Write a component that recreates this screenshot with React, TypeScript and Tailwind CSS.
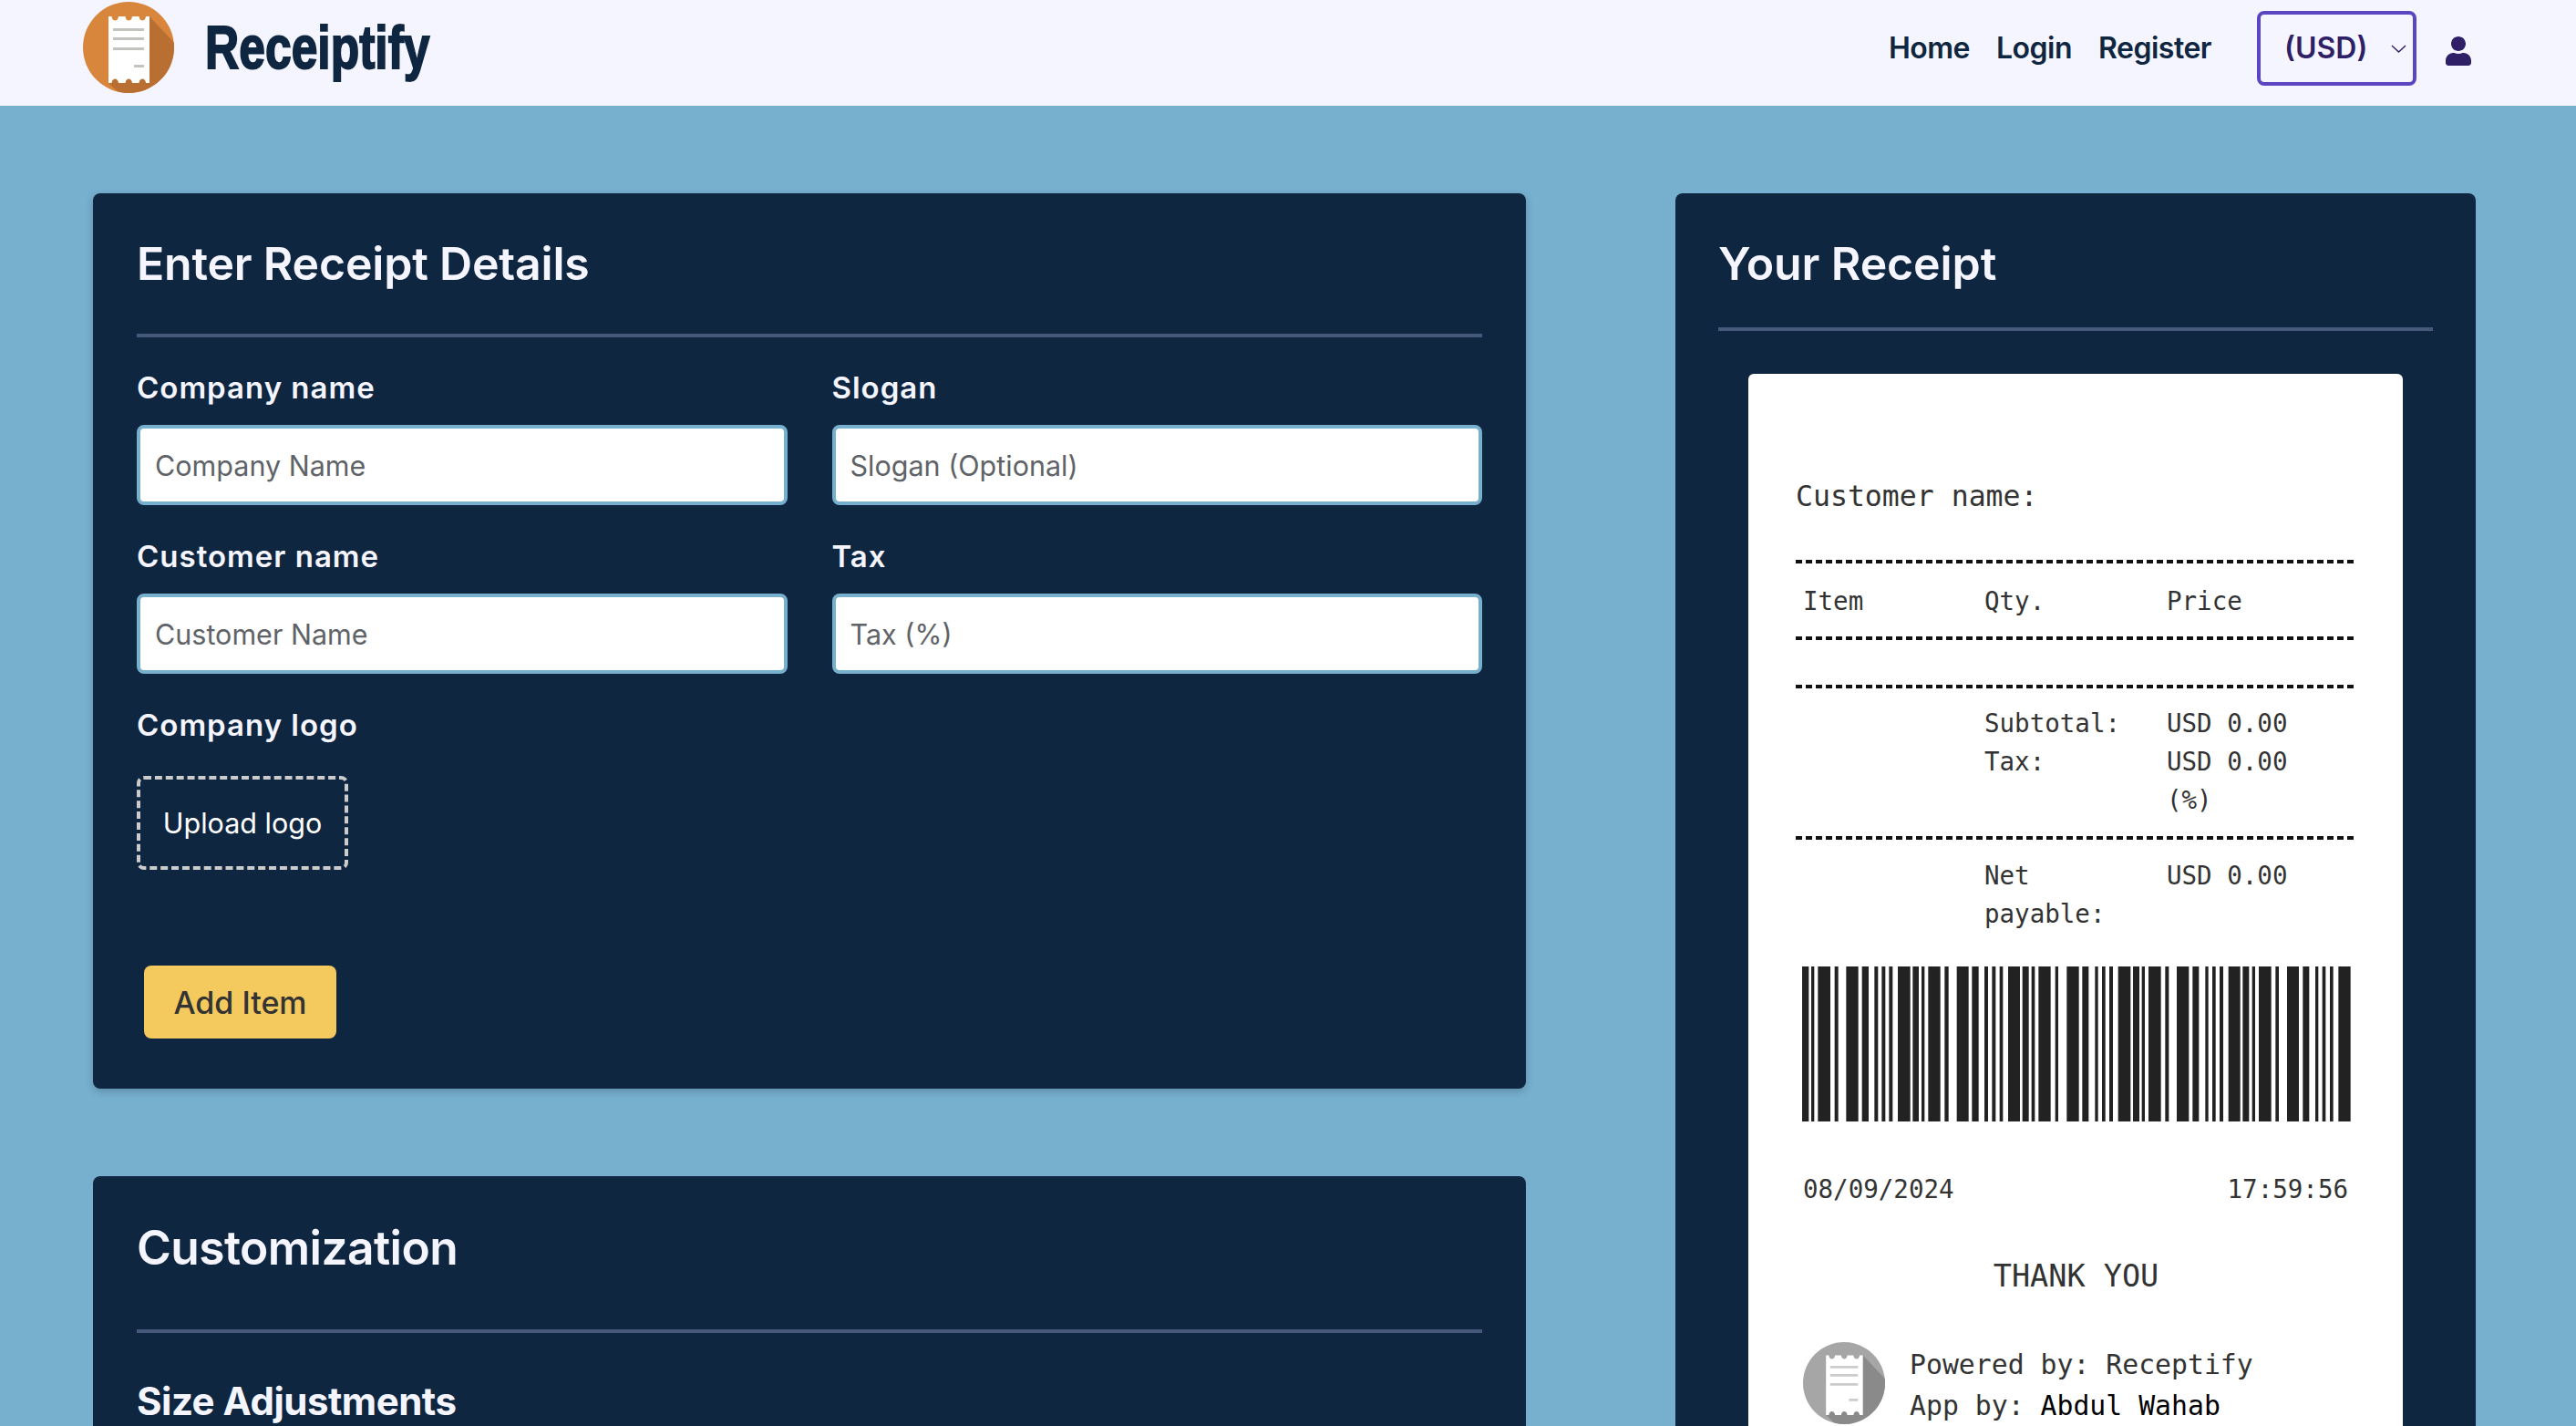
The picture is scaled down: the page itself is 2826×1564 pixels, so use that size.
import { FaUser } from "react-icons/fa";

const BARS = [
  [48, 70], [78, 88], [100, 141], [155, 167], [193, 233], [245, 267], [286, 298], [310, 322], [334, 346], [363, 404],
  [412, 432], [441, 451], [463, 503], [517, 530], [557, 596], [607, 629], [648, 660], [673, 685], [698, 709], [726, 765],
  [773, 794], [803, 814], [826, 866], [881, 891], [919, 959],
  [970, 991], [1012, 1022], [1035, 1046], [1059, 1071], [1088, 1129], [1137, 1158], [1166, 1176], [1188, 1229], [1243, 1255],
  [1281, 1321], [1333, 1354], [1375, 1385], [1398, 1409], [1422, 1434], [1451, 1490], [1498, 1519], [1529, 1539], [1551, 1592],
  [1606, 1617], [1644, 1683], [1696, 1717], [1737, 1747], [1760, 1771], [1785, 1796], [1813, 1853],
];

function Logo({ base, shade, line, className }: { base: string; shade: string; line: string; className: string }) {
  return (
    <svg viewBox="0 0 100 100" className={className}>
      <defs>
        <clipPath id={`c-${base.slice(1)}`}>
          <circle cx="50" cy="50" r="50" />
        </clipPath>
      </defs>
      <circle cx="50" cy="50" r="50" fill={base} />
      <path d="M73 16L105 50V105H45L28 89Z" fill={shade} clipPath={`url(#c-${base.slice(1)})`} />
      <path
        d="M28 16H31.5C32 22 38.5 22 39 16H46.5C47 22 53.5 22 54 16H61.500C62 22 68.500 22 69 16H73V89H69C68.500 83 62 83 61.500 89H54C53.500 83 47 83 46.500 89H39C38.500 83 32 83 31.500 89H28Z"
        fill="#fff"
      />
      <path d="M33 29H67V32H33ZM33 39H67V42H33ZM33 50H67V53H33ZM56 69H67V72H56Z" fill={line} />
    </svg>
  );
}

function Field({ label, placeholder }: { label: string; placeholder: string }) {
  return (
    <div className="flex flex-col">
      <label className="h-[46px] text-[33px] leading-[39px] font-semibold text-[#f5f5ff] tracking-[1px]">{label}</label>
      <input
        placeholder={placeholder}
        className="mt-[14px] h-[88px] w-full rounded-[8px] border-[4px] border-[#77afcf] bg-white px-[16px] text-[30.500px] text-[#333] outline-none placeholder:text-[#5f6368]"
      />
      <div className="h-[37px]" />
    </div>
  );
}

function Dash({ className }: { className: string }) {
  return <div className={`h-[4px] w-full bg-[repeating-linear-gradient(90deg,#111_0,#111_7px,transparent_7px,transparent_11px)] ${className}`} />;
}

export default function App() {
  return (
    <div className="h-screen overflow-hidden bg-[#77afcf] font-['Inter',sans-serif]">
      <header className="flex h-[116px] items-center bg-[#f5f5ff] pb-[10px] pl-[91px] pr-[115px]">
        <Logo base="#d9863d" shade="#b96f32" line="#c4c4bf" className="h-[100px] w-[100px] shrink-0 -translate-y-[1px]" />
        <div className="ml-[34px] origin-left -translate-y-[2px] scale-x-[0.77] font-['Liberation_Sans',sans-serif] text-[67px] leading-none font-bold text-[#0f2640] [-webkit-text-stroke:2px_#0f2640]">
          Receiptify
        </div>
        <nav className="ml-auto flex items-center text-[32px] font-semibold text-[#0f2640]">
          <a className="tracking-[-0.5px]">Home</a>
          <a className="ml-[29px] tracking-[-0.5px]">Login</a>
          <a className="ml-[29px] tracking-[-0.5px]">Register</a>
          <div className="ml-[50px] flex h-[82px] w-[175px] items-center rounded-[8px] border-[4px] border-[#5b45c0] pl-[26px] text-[#2e1f66]">
            <span className="text-[32px]">(USD)</span>
            <svg viewBox="0 0 17 9" className="ml-auto mr-[7px] h-[9px] w-[17px]" fill="none" stroke="#2e1f66" strokeWidth="1.400">
              <path d="M1 1l7.500 7L16 1" />
            </svg>
          </div>
          <FaUser className="ml-[32px] h-[32px] w-[28px] translate-y-[3px] text-[#2e1f66]" />
        </nav>
      </header>

      <main className="flex items-start gap-[164px] pl-[102px] pt-[96px]">
        <div className="flex w-[1572px] shrink-0 flex-col gap-[96px]">
          <section className="h-[982px] rounded-[8px] bg-[#0f2640] px-[48px] shadow-[0_3px_8px_rgba(0,0,0,0.2)]">
            <h2 className="flex h-[154px] items-center text-[50px] font-semibold tracking-[-0.2px] text-[#f5f5ff]">Enter Receipt Details</h2>
            <div className="h-[4px] bg-[#46597a]" />
            <div className="mt-[36px] grid grid-cols-2 gap-x-[49px]">
              <Field label="Company name" placeholder="Company Name" />
              <Field label="Slogan" placeholder="Slogan (Optional)" />
              <Field label="Customer name" placeholder="Customer Name" />
              <Field label="Tax" placeholder="Tax (%)" />
            </div>
            <div className="h-[46px] text-[33px] leading-[38px] font-semibold text-[#f5f5ff] tracking-[1px]">Company logo</div>
            <div className="mt-[29px] flex h-[103px] w-[232px] items-center justify-center rounded-[8px] border-[4px] border-dashed border-[#ccc] text-[30.500px] text-white">
              Upload logo
            </div>
            <button className="ml-[8px] mt-[105px] h-[80px] w-[211px] rounded-[8px] bg-[#f4c95d] text-[34px] font-medium text-[#333]">Add Item</button>
          </section>

          <section className="h-[500px] rounded-[8px] bg-[#0f2640] px-[48px]">
            <h2 className="flex h-[168px] items-center pb-[10px] text-[51.500px] font-semibold tracking-[-0.6px] text-[#f5f5ff]">Customization</h2>
            <div className="h-[4px] bg-[#46597a]" />
            <h3 className="mt-[49px] text-[42px] leading-[52px] font-bold tracking-[-0.5px] text-[#f5f5ff]">Size Adjustments</h3>
          </section>
        </div>

        <section className="w-[878px] shrink-0 rounded-[8px] bg-[#0f2640] px-[47px] pb-[60px]">
          <h2 className="flex h-[147px] items-center pt-[8px] text-[50px] font-semibold tracking-[-0.1px] text-[#f5f5ff]">Your Receipt</h2>
          <div className="h-[4px] bg-[#46597a]" />
          <div className="mx-[33px] mt-[47px] rounded-[6px] bg-white pl-[52px] pr-[51px] pb-[60px] font-['DejaVu_Sans_Mono',monospace] text-[#333]">
            <div className="pt-[114px] text-[31.500px] leading-[40px]">Customer name:</div>
            <Dash className="mt-[50px]" />
            <div className="grid h-[80px] grid-cols-[199px_200px_1fr] items-center pl-[8px] pt-[1px] text-[27.500px] leading-[42px]">
              <div>Item</div>
              <div>Qty.</div>
              <div>Price</div>
            </div>
            <Dash className="" />
            <Dash className="mt-[49px]" />
            <div className="grid grid-cols-[199px_200px_1fr] pl-[8px] pt-[17px] pb-[19px] text-[27.500px] leading-[42px]">
              <div />
              <div>Subtotal:</div>
              <div>USD 0.00</div>
              <div />
              <div>Tax:</div>
              <div>USD 0.00<br />(%)</div>
            </div>
            <Dash className="" />
            <div className="grid grid-cols-[199px_200px_1fr] pl-[8px] pt-[18px] text-[27.500px] leading-[42px]">
              <div />
              <div>Net<br />payable:</div>
              <div>USD 0.00</div>
            </div>
            <svg viewBox="48 0 1806 510" preserveAspectRatio="none" className="ml-[6.500px] mt-[37px] block h-[170px] w-[602px]">
              {BARS.map(([a, b]) => (
                <rect key={a} x={a} y={0} width={b - a} height={510} fill="#222" />
              ))}
            </svg>
            <div className="mt-[53px] flex justify-between pl-[8px] pr-[9px] text-[27.500px] leading-[42px]">
              <span>08/09/2024</span>
              <span>17:59:56</span>
            </div>
            <div className="mt-[53px] text-center text-[33.500px] leading-[44px]">THANK YOU</div>
            <div className="mt-[50px] flex items-start pl-[8px]">
              <Logo base="#a6a6a6" shade="#8a8a8a" line="#ccc" className="h-[90px] w-[90px] shrink-0" />
              <div className="ml-[27px] pt-[2px] text-[29.800px] leading-[45px]">
                <div>Powered by: Receptify</div>
                <div>App by: <span className="text-black">Abdul Wahab</span></div>
              </div>
            </div>
          </div>
        </section>
      </main>
    </div>
  );
}
